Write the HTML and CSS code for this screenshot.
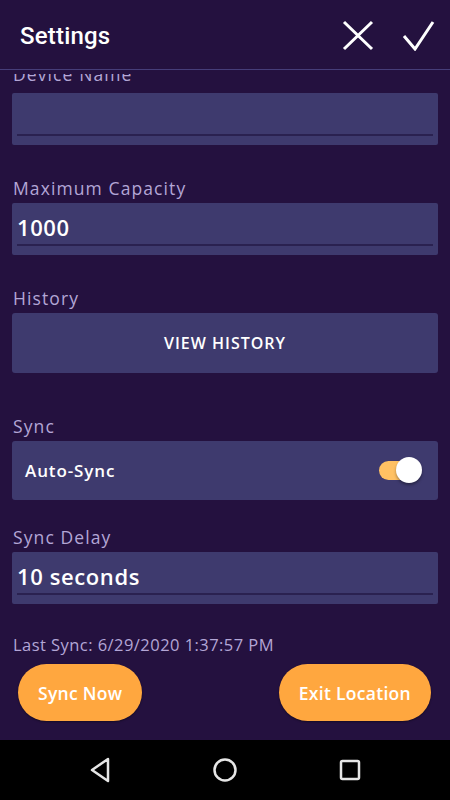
FILE: index.html
```html
<!DOCTYPE html>
<html lang="en">
<head>
    <meta charset="UTF-8">
    <meta name="viewport" content="width=device-width, initial-scale=1.0">
    <title>Settings</title>
    <link rel="stylesheet" href="styles.css">
</head>
<body>
    <div class="app">
        <header class="topbar">
            <h1 class="title">Settings</h1>
            <div class="actions">
                <svg class="icon" width="32" height="32" viewBox="0 0 32 32">
                    <path d="M2 3 L30 30 M30 3 L2 30" stroke="#fff" stroke-width="3" fill="none"/>
                </svg>
                <svg class="icon" width="34" height="32" viewBox="0 0 34 32">
                    <path d="M3 17 L14 30 L32 3" stroke="#fff" stroke-width="3" fill="none"/>
                </svg>
            </div>
        </header>

        <main class="content">
            <div class="scroll">
                <div class="label first">Device Name</div>
                <div class="field">
                    <span class="value"></span>
                </div>

                <div class="label">Maximum Capacity</div>
                <div class="field">
                    <span class="value">1000</span>
                </div>

                <div class="label">History</div>
                <button class="card-button">VIEW HISTORY</button>

                <div class="label sync-label">Sync</div>
                <div class="card">
                    <span>Auto-Sync</span>
                    <span class="toggle"><span class="thumb"></span></span>
                </div>

                <div class="label delay-label">Sync Delay</div>
                <div class="field">
                    <span class="value">10 seconds</span>
                </div>

                <div class="last-sync">Last Sync: 6/29/2020 1:37:57 PM</div>

                <div class="buttons">
                    <button class="pill">Sync Now</button>
                    <button class="pill">Exit Location</button>
                </div>
            </div>
        </main>

        <nav class="navbar">
            <svg width="24" height="28" viewBox="0 0 24 28">
                <path d="M20 3 L4 14 L20 25 Z" stroke="#e6e6e6" stroke-width="2.5" fill="none" stroke-linejoin="round"/>
            </svg>
            <svg width="28" height="28" viewBox="0 0 28 28">
                <circle cx="14" cy="14" r="10.5" stroke="#e6e6e6" stroke-width="2.5" fill="none"/>
            </svg>
            <svg width="24" height="24" viewBox="0 0 24 24">
                <rect x="3" y="3" width="18" height="18" rx="1.5" stroke="#e6e6e6" stroke-width="2.5" fill="none"/>
            </svg>
        </nav>
    </div>
</body>
</html>
```

FILE: styles.css
```css
/* Global */
body {
    margin: 0;
    font-family: "Open Sans", Arial, sans-serif;
    background-color: #24113f;
    color: #fff;
}

.app {
    width: 450px;
    height: 800px;
    display: flex;
    flex-direction: column;
}

/* Top bar */
.topbar {
    height: 69px;
    flex-shrink: 0;
    display: flex;
    align-items: center;
    justify-content: space-between;
    padding: 0 15px 0 20px;
    border-bottom: 1px solid #463d79;
}

.title {
    margin: 3px 0 0;
    font-family: Roboto, Arial, sans-serif;
    font-size: 24px;
    font-weight: 500;
    letter-spacing: 0.2px;
}

.actions {
    display: flex;
    gap: 27px;
    align-items: center;
}

/* Scrolling content */
.content {
    flex: 1;
    overflow: hidden;
    margin-top: 4px;
}

.scroll {
    margin-top: -10px;
    padding: 0 12px;
}

.label {
    font-size: 17.5px;
    line-height: 20px;
    color: #b3a6d6;
    letter-spacing: 1.1px;
    margin: 33px 0 5px 1px;
}

.label.first {
    margin: 0 0 9px 1px;
}

.label.sync-label {
    margin-top: 43px;
}

.label.delay-label {
    margin-top: 27px;
}

.field {
    height: 52px;
    background-color: #3e3a6e;
    border-radius: 2px;
    padding: 0 5px;
    box-sizing: border-box;
}

.value {
    display: block;
    font-size: 22px;
    font-weight: 600;
    letter-spacing: 0.6px;
    line-height: 48px;
    height: 41px;
    overflow: hidden;
}

.field::after {
    content: "";
    display: block;
    height: 2px;
    background-color: #2a2150;
}

.card-button {
    display: block;
    width: 100%;
    height: 60px;
    border: none;
    border-radius: 3px;
    background-color: #3e3a6e;
    color: #fff;
    font-family: "Open Sans", Arial, sans-serif;
    font-size: 16px;
    font-weight: 600;
    letter-spacing: 1px;
}

.card {
    height: 59px;
    background-color: #3e3a6e;
    border-radius: 3px;
    display: flex;
    align-items: center;
    justify-content: space-between;
    padding: 0 17px 0 13px;
    font-size: 17px;
    font-weight: 600;
    letter-spacing: 0.9px;
}

.toggle {
    width: 34px;
    height: 19px;
    border-radius: 10px;
    background-color: #ffc163;
    position: relative;
    margin-right: 8px;
}

.toggle .thumb {
    position: absolute;
    width: 26px;
    height: 26px;
    border-radius: 50%;
    background-color: #fff;
    top: -4px;
    right: -9px;
    box-shadow: 0 2px 3px rgba(0, 0, 0, 0.35);
}

.last-sync {
    margin: 31px 0 0 1px;
    font-size: 16.5px;
    line-height: 20px;
    color: #b3a6d6;
    letter-spacing: 0.45px;
}

.buttons {
    display: flex;
    justify-content: space-between;
    padding: 0 7px 0 6px;
    margin-top: 9px;
}

.pill {
    height: 57px;
    border: none;
    border-radius: 29px;
    background-color: #ffa73f;
    color: #fff;
    font-family: "Open Sans", Arial, sans-serif;
    font-size: 17.5px;
    font-weight: 600;
    letter-spacing: 0.3px;
    padding: 0 20px;
    box-shadow: 0 1px 2px rgba(0, 0, 0, 0.4);
}

/* Android nav bar */
.navbar {
    height: 60px;
    flex-shrink: 0;
    background-color: #000;
    display: flex;
    align-items: center;
    justify-content: center;
    gap: 99px;
}
```
